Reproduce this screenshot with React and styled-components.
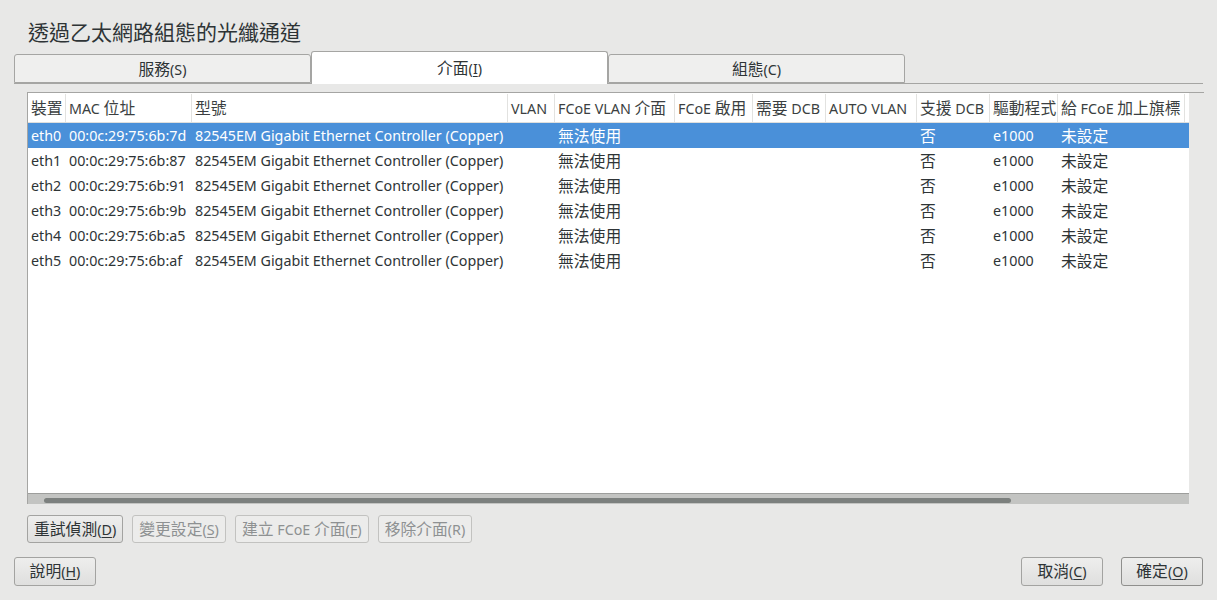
import React from 'react';
import styled, { createGlobalStyle } from 'styled-components';

const GlobalStyle = createGlobalStyle`
  html, body {
    margin: 0;
    padding: 0;
    background: #e8e8e7;
  }
  * { box-sizing: border-box; }
`;

const columns = [
    { key: 'dev', title: '裝置', width: 38 },
    { key: 'mac', title: 'MAC 位址', width: 126 },
    { key: 'model', title: '型號', width: 316 },
    { key: 'vlan', title: 'VLAN', width: 47 },
    { key: 'fcoeVlan', title: 'FCoE VLAN 介面', width: 120 },
    { key: 'fcoeOn', title: 'FCoE 啟用', width: 78 },
    { key: 'needDcb', title: '需要 DCB', width: 73 },
    { key: 'autoVlan', title: 'AUTO VLAN', width: 91 },
    { key: 'dcb', title: '支援 DCB', width: 73 },
    { key: 'driver', title: '驅動程式', width: 68 },
    { key: 'flag', title: '給 FCoE 加上旗標', width: 127 },
];

const macs = ['7d', '87', '91', '9b', 'a5', 'af'];

const rows = macs.map((m, i) => ({
    dev: `eth${i}`,
    mac: `00:0c:29:75:6b:${m}`,
    model: '82545EM Gigabit Ethernet Controller (Copper)',
    vlan: '',
    fcoeVlan: '無法使用',
    fcoeOn: '',
    needDcb: '',
    autoVlan: '',
    dcb: '否',
    driver: 'e1000',
    flag: '未設定',
}));

// the CJK glyphs in the dialog render a bit larger than the latin ones
const hanRun = /([\u3000-\u9fff\uff00-\uffef]+)/;
const txt = (s) =>
    s.split(hanRun).map((part, i) =>
        hanRun.test(part) ? <Han key={i}>{part}</Han> : part
    );

const Mnemonic = ({ text, letter }) => (
    <>
        {txt(text)}(<u>{letter}</u>)
    </>
);

function App() {
    const [tab, setTab] = React.useState('iface');
    const [selected, setSelected] = React.useState(0);

    return (
        <Page>
            <GlobalStyle />
            <Title>透過乙太網路組態的光纖通道</Title>
            <TabStrip>
                <Tab active={tab === 'svc'} onClick={() => setTab('svc')}>{txt('服務')}(S)</Tab>
                <Tab active={tab === 'iface'} onClick={() => setTab('iface')}>
                    <Mnemonic text="介面" letter="I" />
                </Tab>
                <Tab active={tab === 'cfg'} onClick={() => setTab('cfg')}>{txt('組態')}(C)</Tab>
            </TabStrip>
            <Content>
                <TableFrame>
                    <TableArea>
                        <Grid>
                            <HeaderRow>
                                {columns.map((c) => (
                                    <HeadCell key={c.key} w={c.width}>{txt(c.title)}</HeadCell>
                                ))}
                                <Filler />
                            </HeaderRow>
                            {rows.map((r, i) => (
                                <Row key={r.dev} selected={selected === i} onClick={() => setSelected(i)}>
                                    {columns.map((c) => (
                                        <Cell key={c.key} w={c.width}>{txt(r[c.key])}</Cell>
                                    ))}
                                    <Filler />
                                </Row>
                            ))}
                        </Grid>
                        <ScrollTrack>
                            <ScrollThumb />
                        </ScrollTrack>
                    </TableArea>
                </TableFrame>
                <ActionRow>
                    <Button><Mnemonic text="重試偵測" letter="D" /></Button>
                    <Button disabled><Mnemonic text="變更設定" letter="S" /></Button>
                    <Button disabled><Mnemonic text="建立 FCoE 介面" letter="F" /></Button>
                    <Button disabled>{txt('移除介面')}(R)</Button>
                </ActionRow>
            </Content>
            <Footer>
                <DialogButton><Mnemonic text="說明" letter="H" /></DialogButton>
                <FooterRight>
                    <DialogButton><Mnemonic text="取消" letter="C" /></DialogButton>
                    <DialogButton isDefault><Mnemonic text="確定" letter="O" /></DialogButton>
                </FooterRight>
            </Footer>
        </Page>
    );
}

const Page = styled.div`
  width: 1217px;
  height: 600px;
  background: #e8e8e7;
  color: #2e3436;
  font-family: "Noto Sans", "Noto Sans CJK TC", sans-serif;
  font-size: 14.3px;
  overflow: hidden;
  display: flex;
  flex-direction: column;
`;

const Han = styled.span`
  font-family: "Noto Sans CJK TC", sans-serif;
  font-size: 15.8px;
  line-height: 1;
`;

const Title = styled.div`
  font-size: 21px;
  line-height: 28px;
  padding: 17px 0 0 28px;
  height: 51px;
  font-family: "Noto Sans CJK TC", sans-serif;
`;

const TabStrip = styled.div`
  display: flex;
  align-items: flex-end;
  margin: 0 14px;
  height: 33px;
  border-bottom: 1px solid #a5a5a3;
`;

const Tab = styled.div`
  width: 297px;
  height: ${(p) => (p.active ? '33px' : '29px')};
  margin-bottom: ${(p) => (p.active ? '-1px' : '0')};
  background: ${(p) => (p.active ? '#ffffff' : '#efefee')};
  border: 1px solid #a5a5a3;
  border-bottom: ${(p) => (p.active ? 'none' : '1px solid #a5a5a3')};
  border-radius: 3px 3px 0 0;
  display: flex;
  align-items: center;
  justify-content: center;
  padding-top: ${(p) => (p.active ? '0' : '1px')};
  cursor: default;

  u {
    text-decoration-thickness: 1px;
    text-underline-offset: 2px;
  }
`;

const Content = styled.div`
  padding: 8px 13px 0 27px;
`;

const TableFrame = styled.div`
  height: 412px;
  border-top: 1px solid #a5a5a3;
  border-left: 1px solid #a5a5a3;
  display: flex;
`;

const TableArea = styled.div`
  width: 1161px;
  display: flex;
  flex-direction: column;
  background: #ffffff;
`;

const Grid = styled.div`
  flex: 1;
  overflow: hidden;
`;

const HeaderRow = styled.div`
  display: flex;
  height: 30px;
  padding-top: 1px;
  border-bottom: 1px solid #dfdfdd;
`;

const HeadCell = styled.div`
  flex: 0 0 ${(p) => p.w}px;
  padding: 0 3px;
  display: flex;
  align-items: center;
  white-space: pre;
  border-right: 1px solid #e2e2e0;
  color: #3b3f41;
  overflow: hidden;
`;

const Filler = styled.div`
  flex: 1;
`;

const Row = styled.div`
  display: flex;
  height: 25px;
  background: ${(p) => (p.selected ? '#4a90d9' : 'transparent')};
  color: ${(p) => (p.selected ? '#ffffff' : '#2e3436')};
`;

const Cell = styled.div`
  flex: 0 0 ${(p) => p.w}px;
  padding: 0 3px;
  display: flex;
  align-items: center;
  white-space: pre;
  overflow: hidden;
`;

const ScrollTrack = styled.div`
  height: 11px;
  background: #c3c4c2;
  border-top: 1px solid #9d9e9c;
  padding: 4px 0 0 16px;
`;

const ScrollThumb = styled.div`
  width: 967px;
  height: 5px;
  border-radius: 3px;
  background: #7c807e;
`;

const ActionRow = styled.div`
  display: flex;
  gap: 9px;
  margin-top: 11px;
`;

const Button = styled.button`
  height: 28px;
  padding: 0 6px;
  font-family: inherit;
  font-size: 14.3px;
  border-radius: 3px;
  border: 1px solid ${(p) => (p.disabled ? '#c2c2c0' : '#a3a3a1')};
  background: ${(p) => (p.disabled ? '#ececeb' : 'linear-gradient(#eeeeed, #dfdfde)')};
  color: ${(p) => (p.disabled ? '#8e9192' : '#2e3436')};
  white-space: pre;

  u {
    text-decoration-thickness: 1px;
    text-underline-offset: 2px;
  }
`;

const Footer = styled.div`
  display: flex;
  justify-content: space-between;
  padding: 14px 14px 0 14px;
`;

const FooterRight = styled.div`
  display: flex;
  gap: 18px;
`;

const DialogButton = styled(Button)`
  min-width: 82px;
  height: 29px;
  border-color: ${(p) => (p.isDefault ? '#8f8f8d' : '#a3a3a1')};
`;

export default App;
